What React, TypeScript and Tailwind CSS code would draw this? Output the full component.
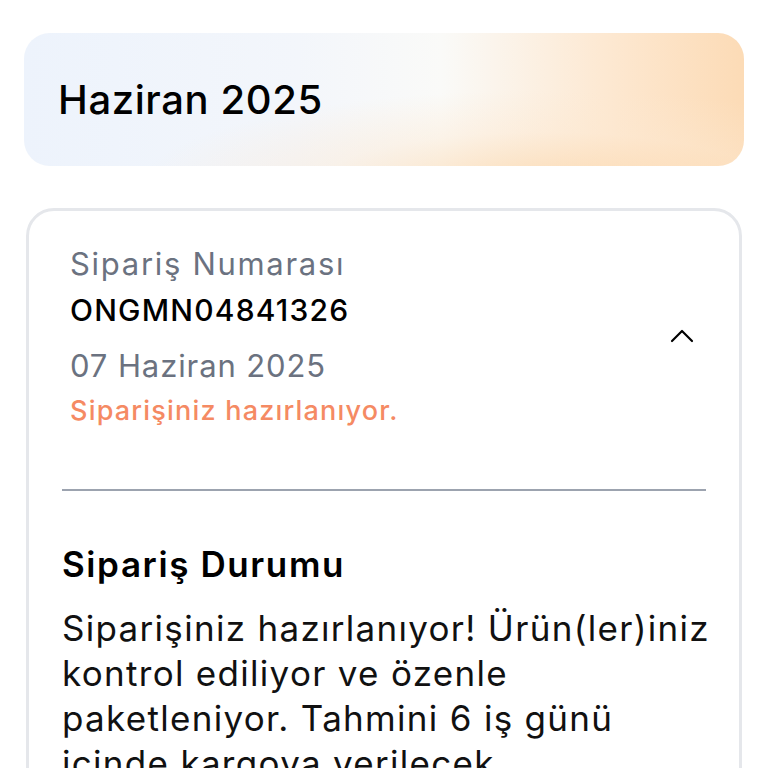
import { ChevronUp } from 'lucide-react';

export default function App() {
  return (
    <div className="min-h-screen overflow-hidden bg-white px-[24px] pt-[33px] font-['Inter',sans-serif]">
      {/* Month header */}
      <div className="flex h-[133px] items-center rounded-[26px] bg-[radial-gradient(70%_90%_at_72%_115%,rgba(251,214,170,0.75)_0%,rgba(253,232,208,0.4)_45%,rgba(253,240,228,0)_80%),linear-gradient(90deg,#edf3fc_0%,#f3f6fb_38%,#fafaf8_58%,#fde9d3_80%,#fcdbb6_100%)] px-[34px]">
        <h1 className="text-[40px] font-medium leading-[48px] tracking-[0.6px] text-black">Haziran 2025</h1>
      </div>

      {/* Order card */}
      <div className="mx-[2px] mt-[42px] rounded-[28px] border-[3px] border-[#e5e7eb] px-[33px] pb-10">
        <div className="flex items-center pb-[58px] pl-[8px] pr-[4px] pt-[30px]">
          <div className="flex-1">
            <p className="text-[31px] leading-[46px] tracking-[1.7px] text-[#6b7280]">Sipariş Numarası</p>
            <p className="text-[30px] font-medium leading-[46px] tracking-[1.2px] text-black">ONGMN04841326</p>
            <p className="mt-[10px] text-[31px] leading-[46px] tracking-[0.9px] text-[#6b7280]">07 Haziran 2025</p>
            <p className="mt-[2px] text-[27px] font-medium leading-[40px] tracking-[1.2px] text-[#f58a63]">
              Siparişiniz hazırlanıyor.
            </p>
          </div>
          <ChevronUp className="h-[40px] w-[40px] text-black" strokeWidth={1.3} />
        </div>

        <div className="h-[2px] bg-[#9ca3af]" />

        <div className="pt-[49px]">
          <h2 className="text-[35px] font-semibold leading-[48px] tracking-[1.6px] text-black">Sipariş Durumu</h2>
          <p className="mt-[18px] text-[35px] leading-[45px] tracking-[1.3px] text-[#111111]">
            <span className="block whitespace-nowrap">Siparişiniz hazırlanıyor! Ürün(ler)iniz</span>
            <span className="block whitespace-nowrap">kontrol ediliyor ve özenle</span>
            <span className="block whitespace-nowrap">paketleniyor. Tahmini 6 iş günü</span>
            <span className="block whitespace-nowrap">içinde kargoya verilecek.</span>
          </p>
        </div>
      </div>
    </div>
  );
}
